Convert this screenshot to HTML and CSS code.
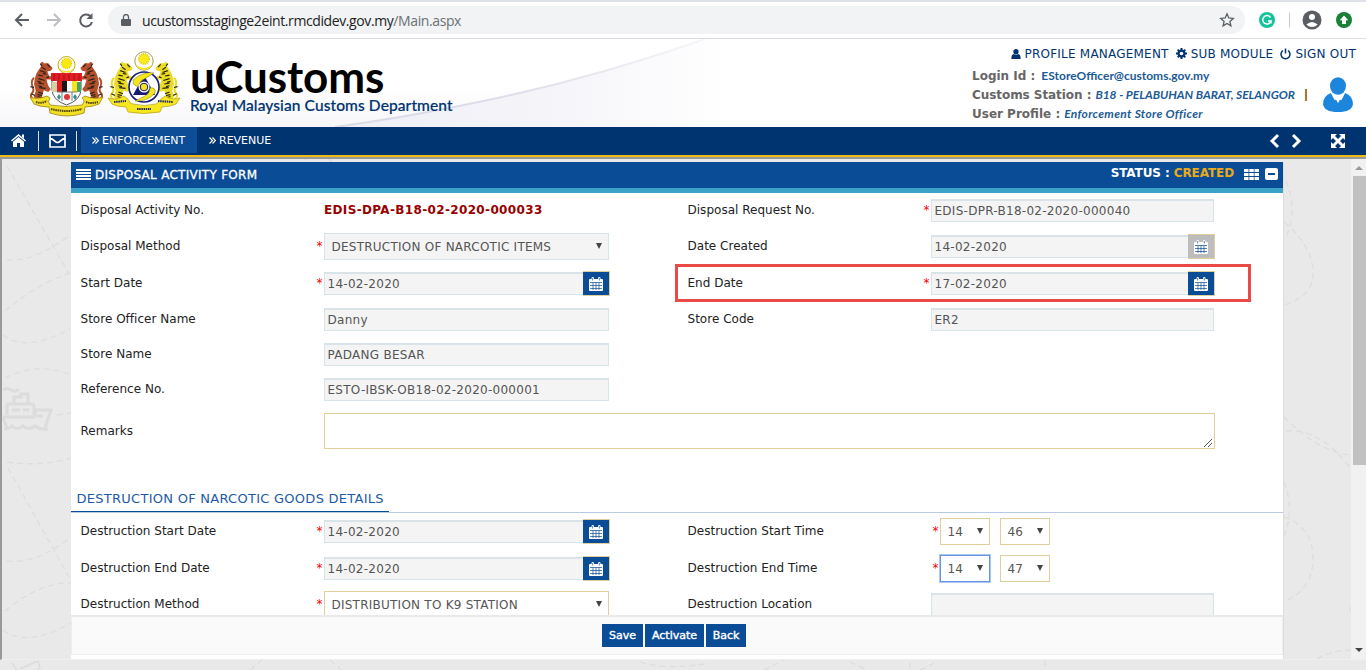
FILE: index.html
```html
<!DOCTYPE html>
<html lang="en">
<head>
<meta charset="utf-8">
<title>uCustoms</title>
<link rel="stylesheet" href="styles.css">
</head>
<body>
<svg class="defs" width="0" height="0">
  <symbol id="cal" viewBox="0 0 14 14">
    <path fill="currentColor" d="M1 2h1.500V1.200Q2.500 0 3.700 0t1.300 1.200V2h4v-.8Q9 0 10.300 0t1.200 1.200V2H13q1 0 1 1v10q0 1-1 1H1q-1 0-1-1V3q0-1 1-1z"/>
    <path class="cal-grid" d="M1 5.500h12M1 8.500h12M1 11.500h12M4 5.500V13M7 5.500V13M10 5.500V13M3.700 1v2.500M10.300 1v2.500"/>
  </symbol>
  <symbol id="tiger" viewBox="0 0 28 54">
    <path d="M7 46C2 44 0 40 3 37s1-5 0-8 0-7 2-9" fill="none" stroke="currentColor" stroke-width="2.200"/>
    <path d="M13 7Q12 3 14 2l3 2q4-2 6 2l3 3-2 3-4 1 2 5 5 1-1 3-7 0 2 7 3 4-3 3-5-2-2 7 3 4-2 3-8-2-2-5 2-6-2-8q1-9 4-14z" fill="currentColor"/>
    <path class="stripes" d="M14 8l4 3M12 12l6 2M10 17l5 1M10 21l7 2M10 26l6 1M11 31l7 1M10 36l5 2M9 41l6 2M20 5l3 3M1 30l4 1M2 38l4 2M19 20l3-1M15 15l4 1M9 24l4 1M10 29l4 1M9 39l5 1M12 4l2 3"/>
  </symbol>
</svg>

<div class="browser">
  <svg class="nav-icons" width="92" height="20" viewBox="0 0 92 20">
    <path d="M15 10H2M8 4l-6 6 6 6" class="ico"/>
    <path d="M33 10h13M40 4l6 6-6 6" class="ico pale"/>
    <path d="M76.500 6.200A6 6 0 1 0 78 12" class="ico"/><path d="M78.500 3v6h-6z" fill="#5a5e63"/>
  </svg>
  <div class="address">
    <svg width="10" height="13" viewBox="0 0 10 13"><path d="M1 5h8q1 0 1 1v5q0 1-1 1H1q-1 0-1-1V6q0-1 1-1z" fill="#5a5e63"/><path d="M2.500 5.500V3a2.500 2.500 0 0 1 5 0v2.500" fill="none" stroke="#5a5e63" stroke-width="1.300"/></svg>
    <span class="url">ucustomsstaginge2eint.rmcdidev.gov.my<span>/Main.aspx</span></span>
    <svg class="star" width="16" height="16" viewBox="0 0 16 16"><path d="M8 1.800l1.800 4.200 4.500.4-3.400 3 1 4.400L8 11.400l-3.900 2.400 1-4.400-3.400-3 4.500-.4z" fill="none" stroke="#5a5e63" stroke-width="1.300"/></svg>
  </div>
  <svg class="ext" width="98" height="20" viewBox="0 0 98 20">
    <circle cx="9" cy="10" r="8" fill="#15c39a"/><path d="M12.500 7.500A4.200 4.200 0 1 0 13 11h-3M13 11v2.500" fill="none" stroke="#fff" stroke-width="1.500"/>
    <path d="M31.500 2.500v15" stroke="#c5c8cc"/>
    <circle cx="54" cy="10" r="9.500" fill="#5a5e63"/><circle cx="54" cy="7" r="3" fill="#fff"/><path d="M48.300 14.500q5.700-5 11.400 0-5.700 5-11.400 0z" fill="#fff"/>
    <circle cx="86" cy="10" r="8" fill="#188038"/><path d="M86 5.500l4.300 4.700H88V14h-4v-3.800h-2.300z" fill="#fff"/>
  </svg>
</div>

<header class="masthead">
  <svg class="swoosh" width="730" height="88" viewBox="0 0 730 88">
    <defs>
      <linearGradient id="sw" x1="0" y1="0" x2="0" y2="1"><stop offset="0" stop-color="#fff"/><stop offset=".55" stop-color="#fff"/><stop offset="1" stop-color="#f6f6f9"/></linearGradient>
      <linearGradient id="sw2" x1="0" y1="0" x2="1" y2="0"><stop offset="0" stop-color="#eeeff5"/><stop offset=".5" stop-color="#f4f4f9"/><stop offset="1" stop-color="#fff"/></linearGradient>
      <linearGradient id="sw3" x1="0" y1="0" x2="1" y2="0"><stop offset="0" stop-color="#d9dae8"/><stop offset=".5" stop-color="#dddee9"/><stop offset="1" stop-color="#f6f6fa"/></linearGradient>
    </defs>
    <path d="M0 0h705Q580 44 454 68T335 88H0z" fill="url(#sw)"/>
    <path d="M335 88Q400 79 454 68 580 44 705 0h25v88z" fill="url(#sw2)"/>
    <path d="M335 88Q400 79 454 68 580 44 705 0" fill="none" stroke="url(#sw3)" stroke-width="2"/>
  </svg>
  <div class="brand">
    <svg class="crests" width="152" height="66" viewBox="0 0 152 66">
      <g color="#b4502c" class="crest-one">
        <circle cx="37.500" cy="14" r="8.500" fill="#fff" stroke="#c5a90c"/>
        <path d="M29 13a8.500 8.500 0 0 0 17 0 8 6.500 0 0 1-17 0z" fill="#f6df2c"/>
        <circle cx="37.500" cy="12.500" r="5" fill="#fae90e" stroke="#e5c600" stroke-width="1.500" stroke-dasharray="1 1"/>
        <use href="#tiger" x="0" y="9" width="26" height="48"/>
        <use href="#tiger" x="0" y="9" width="26" height="48" transform="translate(75 0) scale(-1 1)"/>
        <path d="M23 23h29v15q0 11-14.500 16Q23 49 23 38z" fill="#fff" stroke="#555"/>
        <path d="M22 22h31v8H22z" fill="#e31c24"/><path d="M25 23v7M30 23v7M35 23v7M40 23v7M45 23v7M50 23v7" stroke="#a41119"/>
        <path d="M28 30h5v11h-5z" fill="#e31c24"/><path d="M33 30h5v11h-5z" fill="#171717"/><path d="M43 30h5v11h-5z" fill="#fae221"/><path d="M23 31h5v10h-5z" fill="#d3d0a4"/><path d="M48 31h4v10h-4z" fill="#48a36a"/>
        <path d="M28 41h20M33 41v9M43 41v9" stroke="#777"/><circle cx="38" cy="46" r="3" fill="#e23336"/><path d="M30 43l2 3-2 3-2-3zM46 43l2 3-2 3-2-3z" fill="#318f91"/>
        <path d="M1 46q7 3 17-1l3 2q-3 4 0 7 16 3 32 0 4-4 0-7l3-2q10 4 18 1l-4 7q-7 3-14 3l-1 6q-17 6-34 0l-1-6q-9 0-15-3z" fill="#f3df24" stroke="#9a8410" stroke-width=".8"/>
        <path d="M7 51q5 2 11-1M22 58q16 4 31 0M57 51q5 2 12 0" fill="none" stroke="#504306" stroke-width="2" stroke-dasharray="1.500 .7"/>
      </g>
      <g color="#eadb25" class="crest-two">
        <circle cx="115" cy="10" r="9.200" fill="#fff" stroke="#a69b4d"/>
        <path d="M106 10a9 9 0 0 0 18 0 8.500 6.500 0 0 1-18 0z" fill="#f8e91a"/>
        <circle cx="115" cy="8" r="5" fill="#fbed1b" stroke="#e3cc00" stroke-width="2" stroke-dasharray="1 1"/>
        <use href="#tiger" x="80" y="9" width="26" height="48"/>
        <use href="#tiger" x="80" y="9" width="26" height="48" transform="translate(230 0) scale(-1 1)"/>
        <circle cx="115" cy="36" r="15" fill="#fff" stroke="#171a75" stroke-width="1.600"/>
        <path d="M115 24l11 20h-22z" fill="#171a75"/>
        <path d="M104 29q10-9 21-7l-8 5q-7 3-7 8-6 1-6-6zM126 42q-8 9-20 8l10-5q5-3 5-8 6-1 5 5z" fill="#f5e51b" stroke="#777016" stroke-width=".5"/>
        <circle cx="115" cy="36" r="5.500" fill="#fff"/><circle cx="115" cy="36" r="3.800" fill="#f5e51b" stroke="#171a75"/>
        <path d="M79 47q8 3 16-2l4 3q2 5 5 5 11 3 23 0 4-2 5-5l4-3q9 5 15 2l-4 6q-7 3-14 3l-2 5q-17 3-32 0l-2-5q-9 0-14-3z" fill="#f7e71e" stroke="#b39e17" stroke-width=".7"/>
        <path d="M85 51l12-1M108 58h14M129 50l15 1" stroke="#242566" stroke-width="2" stroke-dasharray="1.500 .7"/>
      </g>
    </svg>
    <div class="brand-text"><div class="brand-name">uCustoms</div><div class="brand-sub">Royal Malaysian Customs Department</div></div>
  </div>
  <div class="account">
    <div class="links">
      <svg width="10" height="10" viewBox="0 0 10 11"><circle cx="5" cy="3" r="2.900"/><path d="M0 11V9q0-3 2.500-3.500 2.500 1.500 5 0Q10 6 10 9v2z"/></svg><span>PROFILE MANAGEMENT</span>
      <svg width="11" height="11" viewBox="0 0 11 11"><path d="M4.500 0h2v11h-2zM0 4.500h11v2H0zM1 2.300L2.300 1 10 8.700 8.700 10zM8.700 1L10 2.300 2.300 10 1 8.700z"/><circle cx="5.500" cy="5.500" r="4"/><circle cx="5.500" cy="5.500" r="1.800" fill="#fff"/></svg><span>SUB MODULE</span>
      <svg width="11" height="12" viewBox="0 0 11 12"><path d="M3 2.500a4.500 4.500 0 1 0 5 0M5.500.500v5" fill="none" stroke="#003470" stroke-width="1.500"/></svg><span>SIGN OUT</span>
    </div>
    <div class="who">
      <div class="facts">
        <div><b>Login Id :</b><span class="v1">EStoreOfficer@customs.gov.my</span></div>
        <div><b class="b2">Customs Station :</b><i class="v2">B18 - PELABUHAN BARAT, SELANGOR</i></div>
        <div><b class="b3">User Profile :</b><i class="v3">Enforcement Store Officer</i></div>
      </div>
      <span class="bar"></span>
      <svg class="avatar" width="32" height="35" viewBox="0 0 32 35"><ellipse cx="16" cy="9" rx="8" ry="8.800" fill="#1c86dc"/><path d="M9 16q2 5 4 7.500 1.500-2.500 3 1.500 1.500-4 3-1.500Q21 21 23 16q8 3 8 11-1 8-15 8T1 27q0-8 8-11z" fill="#1c86dc"/><path d="M10.500 16.500L16 26l5.500-9.500Q16 20 10.500 16.500z" fill="#fff"/></svg>
    </div>
  </div>
</header>

<nav class="menu">
  <span class="home"><svg width="15" height="13" viewBox="0 0 15 13"><path d="M7.500 0L15 6.500l-1 1-6.500-5.600L1 7.500l-1-1z"/><path d="M7.500 3L13 7.700V13H9V9H6v4H2V7.700zM11 .500h2v4l-2-1.700z"/></svg></span>
  <span class="mail"><svg width="17" height="14" viewBox="0 0 17 14"><path d="M1 1h15v12H1zM1 3.500l6 4.500q1.500 1 3 0l6-4.500" fill="none" stroke="#fff" stroke-width="1.700"/></svg></span>
  <span class="tab on"><svg width="7" height="7" viewBox="0 0 7 7"><path d="M.5.500l3 3-3 3M3.500.500l3 3-3 3" class="chev"/></svg><span>ENFORCEMENT</span></span>
  <span class="tab"><svg width="7" height="7" viewBox="0 0 7 7"><path d="M.5.500l3 3-3 3M3.500.500l3 3-3 3" class="chev"/></svg><span>REVENUE</span></span>
  <svg class="menu-right" width="80" height="16" viewBox="0 0 80 16">
    <path d="M10 2L4 8l6 6M25 2l6 6-6 6" fill="none" stroke="#fff" stroke-width="3"/>
    <path d="M63 1h6l-2 2 3 3 3-3-2-2h6v6l-2-2-3 3 3 3 2-2v6h-6l2-2-3-3-3 3 2 2h-6V9l2 2 3-3-3-3-2 2z"/>
  </svg>
</nav>

<div class="stage">
  <svg class="backdrop" width="1366" height="511" viewBox="0 159 1366 511">
    <g class="routes">
      <path d="M7 166L69 274M7 260Q35 262 70 235M5 311Q35 285 70 273M3 335Q26 353 70 329M5 378Q36 362 69 374M57 415l14-2M7 462Q40 467 71 458M8 468L69 577M7 561Q35 565 71 537M5 611Q40 582 71 583M3 630Q26 648 71 623M305 160l8-4M327 158l8 6"/>
      <path d="M1286 181q12 28 0 56M1284 222q30 25 29 53-1 22-29 30M1284 417q36 36 67 38M1286 431q35-3 65 38M1284 482q11 27 0 54M1284 517q29 10 29 42 0 30-29 43M1317 659q16-9 34-9M1350 607v4"/>
      <path d="M250 670l12-10M330 660l12 10M640 662q24 8 65 2M764 670l20-10M850 662l18 8M910 662v8M920 670l16-8M1045 660v10"/>
    </g>
    <g class="ship"><path d="M3 390q4-3 8 0t8-1M7 415v-9q0-2 2-2h22q3 0 3 3v8M3 417h31l2-7h15l-6 18M3 417l4 11M14 403v-6h7v-3h7v9M4 429q5 0 8-3 5 5 11 0 6 5 12 0 5 4 13 3"/><path d="M12 410h8M23 410h6M36 416h7"/><path d="M12 663l8 12M20 669l18-8 2 7-12 7" stroke-width="1.500"/></g>
  </svg>
  <div class="frame">
    <main class="panel">
      <div class="panel-head">
        <span class="title"><svg width="15" height="11" viewBox="0 0 15 11"><path d="M0 0h15v2H0zM0 3h15v2H0zM0 6h15v2H0zM0 9h15v2H0z"/></svg><span>DISPOSAL ACTIVITY FORM</span></span>
        <span class="status"><span class="st">STATUS : <em>CREATED</em></span>
          <svg width="15" height="11" viewBox="0 0 15 11"><path d="M0 0h4.500v3H0zM5.300 0h4.500v3H5.300zM10.500 0H15v3h-4.500zM0 4h4.500v3H0zM5.300 4h4.500v3H5.300zM10.500 4H15v3h-4.500zM0 8h4.500v3H0zM5.300 8h4.500v3H5.300zM10.500 8H15v3h-4.500z"/></svg>
          <svg width="13" height="12" viewBox="0 0 13 12"><rect width="13" height="12" rx="2"/><path d="M3 5h7v2H3z" fill="#0b4c97"/></svg>
        </span>
      </div>
      <div class="form">
        <div class="row r35">
          <div class="cell"><label>Disposal Activity No.</label><s></s><strong>EDIS-DPA-B18-02-2020-000033</strong></div>
          <div class="cell"><label>Disposal Request No.</label><s>*</s><div class="box">EDIS-DPR-B18-02-2020-000040</div></div>
        </div>
        <div class="row r37">
          <div class="cell"><label>Disposal Method</label><s>*</s><div class="pick grey"><span>DESTRUCTION OF NARCOTIC ITEMS</span><u></u></div></div>
          <div class="cell"><label>Date Created</label><s></s><div class="box dated">14-02-2020</div><span class="cal off"><svg width="14" height="14"><use href="#cal"/></svg></span></div>
        </div>
        <div class="row r37">
          <div class="cell"><label>Start Date</label><s>*</s><div class="box dated">14-02-2020</div><span class="cal"><svg width="14" height="14"><use href="#cal"/></svg></span></div>
          <div class="cell"><label>End Date</label><s>*</s><div class="box dated">17-02-2020</div><span class="cal"><svg width="14" height="14"><use href="#cal"/></svg></span><div class="highlight"></div></div>
        </div>
        <div class="row r35">
          <div class="cell"><label>Store Officer Name</label><s></s><div class="box">Danny</div></div>
          <div class="cell"><label>Store Code</label><s></s><div class="box">ER2</div></div>
        </div>
        <div class="row r35"><div class="cell"><label>Store Name</label><s></s><div class="box">PADANG BESAR</div></div></div>
        <div class="row r35"><div class="cell"><label>Reference No.</label><s></s><div class="box">ESTO-IBSK-OB18-02-2020-000001</div></div></div>
        <div class="row r48"><div class="cell wide"><label>Remarks</label><s></s><div class="area"><svg width="9" height="9" viewBox="0 0 9 9"><path d="M0 9l8-8M4 9l4-4" stroke="#555"/></svg></div></div></div>
        <div class="section"><h2>DESTRUCTION OF NARCOTIC GOODS DETAILS</h2></div>
        <div class="row r37">
          <div class="cell"><label>Destruction Start Date</label><s>*</s><div class="box dated">14-02-2020</div><span class="cal"><svg width="14" height="14"><use href="#cal"/></svg></span></div>
          <div class="cell time"><label>Destruction Start Time</label><s>*</s><div class="pick small"><span>14</span><u></u></div><div class="pick small"><span>46</span><u></u></div></div>
        </div>
        <div class="row r37">
          <div class="cell"><label>Destruction End Date</label><s>*</s><div class="box dated">14-02-2020</div><span class="cal"><svg width="14" height="14"><use href="#cal"/></svg></span></div>
          <div class="cell time"><label>Destruction End Time</label><s>*</s><div class="pick small focus"><span>14</span><u></u></div><div class="pick small"><span>47</span><u></u></div></div>
        </div>
        <div class="row r35">
          <div class="cell"><label>Destruction Method</label><s>*</s><div class="pick"><span>DISTRIBUTION TO K9 STATION</span><u></u></div></div>
          <div class="cell"><label>Destruction Location</label><s></s><div class="box"></div></div>
        </div>
      </div>
      <footer class="actions"><button>Save</button><button>Activate</button><button>Back</button></footer>
    </main>
    <div class="scroll"><span class="up"></span><span class="thumb"></span><span class="down"></span></div>
  </div>
</div>
</body>
</html>
```
FILE: styles.css
```css
* { box-sizing: border-box; }
body { margin: 0; width: 1366px; height: 670px; overflow: hidden; background: #fff; font-family: "DejaVu Sans", Verdana, sans-serif; font-size: 12px; color: #333; }
svg { display: block; flex: none; }
.defs { position: absolute; }

.browser { height: 39px; border-top: 2px solid #dee1e6; border-bottom: 1px solid #dadce0; display: flex; align-items: center; padding: 0 0 0 14px; }
.nav-icons { margin-right: 2px; }
.ico { fill: none; stroke: #5a5e63; stroke-width: 2; }
.pale { stroke: #bbbdc0; }
.address { width: 1137px; height: 28px; border-radius: 14px; background: #f1f3f4; display: flex; align-items: center; padding: 0 10px 0 13px; }
.url { font: 14px "Open Sans", sans-serif; letter-spacing: -.4px; color: #222; margin-left: 11px; white-space: nowrap; }
.url span { color: #6c7075; }
.star { margin-left: auto; }
.ext { margin-left: 13px; }

.masthead { height: 88px; position: relative; display: flex; justify-content: space-between; background: #fff; }
.swoosh { position: absolute; left: 0; top: 0; }
.brand { position: relative; display: flex; padding: 12px 0 0 29px; }
.brand-text { padding: 4px 0 0 9px; color: #000; font-family: Lato, sans-serif; white-space: nowrap; }
.brand-name { font-size: 44px; line-height: 42px; height: 42px; font-weight: 700; letter-spacing: -.1px; }
.brand-sub { font-size: 15.500px; line-height: 18px; height: 18px; margin-top: -1px; font-weight: 500; color: #003470; letter-spacing: .1px; -webkit-text-stroke: .2px #003470; }
.stripes { stroke: #26201a; stroke-width: 1.300; fill: none; }
.crest-two .stripes { stroke: #2b2b62; }

.account { position: relative; width: 394px; padding-top: 6px; }
.links { display: flex; align-items: center; justify-content: flex-end; padding-right: 10px; height: 17px; color: #003470; white-space: nowrap; letter-spacing: .22px; }
.links svg { fill: #003470; margin: 0 4px 0 7px; }
.who { display: flex; align-items: center; margin-top: 4px; }
.facts { width: 333px; }
.facts div { height: 19px; display: flex; align-items: center; white-space: nowrap; }
.facts b { color: #666; font-size: 12px; margin-right: 6px; }
.facts .b2 { letter-spacing: -.06px; margin-right: 4px; }
.facts .b3 { margin-right: 4px; }
.facts span, .facts i { color: #1c5b95; font-family: Lato, sans-serif; font-size: 12px; font-weight: 700; }
.facts .v2 { letter-spacing: -.04px; }
.facts .v3 { letter-spacing: .3px; }
.bar { width: 2px; height: 12px; background: #b5742c; }
.avatar { margin-left: 15px; }

.menu { height: 30px; background: #003470; border-bottom: 2px solid #edbb11; color: #fff; display: flex; align-items: center; }
.menu svg { fill: #fff; }
.menu .chev { fill: none; stroke: #fff; stroke-width: 1.200; }
.home { width: 39px; height: 20px; padding: 3px 0 0 11px; border-right: 1px solid #ddd; }
.mail { width: 38px; height: 20px; padding: 3px 0 0 10px; border-right: 1px solid #ddd; margin-right: 4px; }
.tab { height: 26px; align-self: flex-start; display: flex; align-items: center; gap: 3px; padding: 0 11px; font-size: 11px; }
.tab.on { background: #0d4c97; width: 116px; margin-right: 1px; }
.menu-right { margin-left: auto; margin-right: 18px; }

.stage { position: relative; height: 513px; background: #e9e9e9; }
.backdrop { position: absolute; left: 0; top: 2px; }
.routes { fill: none; stroke: #dedede; stroke-width: 1.400; stroke-dasharray: 6 4; }
.ship { fill: none; stroke: #dcdcdc; stroke-width: 3; }
.frame { position: relative; height: 503px; border-top: 2px solid #999; border-left: 2px solid #999; border-bottom: 1px solid #efefef; display: flex; justify-content: space-between; }
.panel { width: 1213px; margin: 3px 0 0 69px; background: #fff; border-right: 1px solid #ddd; display: flex; flex-direction: column; }
.panel-head { height: 31px; width: 1212px; flex: none; background: #0b4c97; border-bottom: 5px solid #3ba3c8; display: flex; justify-content: space-between; color: #fff; padding: 0 5px; }
.panel-head svg { fill: #fff; }
.title, .status { display: flex; align-items: center; height: 24px; white-space: nowrap; }
.title { gap: 4px; -webkit-text-stroke: .3px #fff; }
.title span { letter-spacing: .28px; margin-top: 1px; }
.status { gap: 6px; font-weight: 700; }
.status .st { margin: -3px 4px 0 0; letter-spacing: -.1px; }
.status em { font-style: normal; color: #eaaa18; }

.form { height: 422px; overflow: hidden; }
.row { display: flex; }
.r35 { height: 35px; }
.r37 { height: 37px; }
.r48 { height: 48px; }
.cell { width: 607px; display: flex; align-items: center; padding-left: 9px; position: relative; white-space: nowrap; }
.cell + .cell { width: 605px; }
.cell label { width: 237px; flex: none; padding-left: .5px; color: #222; margin-top: -1px; letter-spacing: .02px; }
.cell s { width: 7px; flex: none; color: #f00; text-decoration: none; font-size: 12px; margin-top: -2px; text-indent: -.5px; }
.cell strong { color: #900; margin-top: -1px; letter-spacing: .35px; }
.box { width: 285px; height: 23px; background: #f4f4f4; border: 1px solid #d5e5e9; border-top: 2px solid #dae3e8; padding-left: 2.500px; line-height: 20px; color: #555; letter-spacing: .27px; }
.cell + .cell .box { width: 283px; }
.box.dated { width: 259px; border-right: 0; }
.cell + .cell .dated { width: 257px; }
.cal { width: 27px; height: 25px; border: 1px solid #dfcf9c; border-left: 0; background: #0b4c97; color: #fff; display: flex; align-items: center; justify-content: center; padding-right: 1px; }
.cal-grid { fill: none; stroke: #0b4c97; stroke-width: .7; }
.off { background: #bdbdbd; }
.pick { width: 285px; height: 27px; background: #fff; border: 1px solid #dfcf9c; display: flex; align-items: center; justify-content: space-between; padding: 0 6px 0 6.500px; color: #555; letter-spacing: .24px; }
.pick.grey { background: #f4f4f4; border-color: #d5e5e9; }
.pick u { border: 3.500px solid transparent; border-top: 6px solid #444; border-bottom: 0; margin-top: -2px; }
.cell + .time label { width: 246px; }
.pick.small { width: 50px; margin-right: 10px; }
.pick.focus { border-color: #6495e0; box-shadow: 0 0 0 1px #a9c8f5; }
.highlight { position: absolute; left: -3px; top: -1px; width: 576px; height: 38px; border: 3px solid #ea4a45; }
.wide { width: 1150px; }
.area { width: 891px; height: 36px; border: 1px solid #dfcf9c; background: #fff; display: flex; align-items: flex-end; justify-content: flex-end; padding: 1px; }
.section { height: 58px; border-bottom: 1px solid #b8cbe2; display: flex; align-items: flex-end; }
.section h2 { margin: 0; width: 318px; height: 27px; border-bottom: 1px solid #0b4c97; padding: 6px 0 0 5.500px; font-size: 13px; line-height: 16px; font-weight: 400; color: #1c5aa6; white-space: nowrap; letter-spacing: .27px; }
.actions { height: 40px; background: #fafafa; border: 1px solid #eee; border-top: 2px solid #e9e9e9; display: flex; align-items: center; gap: 2px; padding-left: 530px; }
.actions button { margin: 0; height: 23px; border: 0; background: #0b4c97; color: #fff; font: 600 11px "DejaVu Sans", sans-serif; font-weight: 400; -webkit-text-stroke: .4px #fff; padding: 0; }
.actions button:nth-child(1) { width: 41px; }
.actions button:nth-child(2) { width: 59px; }
.actions button:nth-child(3) { width: 40px; }
.scroll { width: 15px; background: #f1f1f1; display: flex; flex-direction: column; align-items: center; }
.up { border: 4px solid transparent; border-bottom: 4px solid #999; border-top: 0; margin: 7px 0 6px; }
.thumb { width: 13px; height: 289px; background: #c1c1c1; align-self: flex-end; }
.down { border: 4px solid transparent; border-top: 4px solid #444; border-bottom: 0; margin-top: auto; margin-bottom: 7px; }
```
